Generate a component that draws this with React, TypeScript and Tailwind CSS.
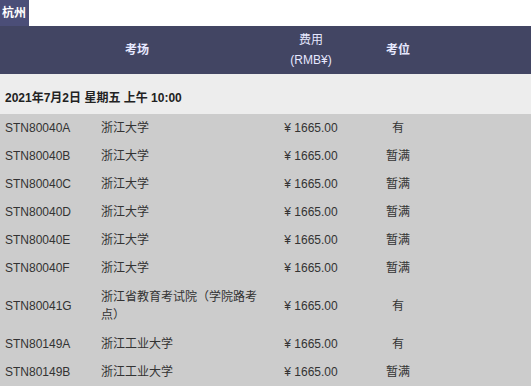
const rows = [
  { code: "STN80040A", site: "浙江大学", seat: "有" },
  { code: "STN80040B", site: "浙江大学", seat: "暂满" },
  { code: "STN80040C", site: "浙江大学", seat: "暂满" },
  { code: "STN80040D", site: "浙江大学", seat: "暂满" },
  { code: "STN80040E", site: "浙江大学", seat: "暂满" },
  { code: "STN80040F", site: "浙江大学", seat: "暂满" },
  { code: "STN80041G", site: "浙江省教育考试院（学院路考点）", seat: "有", tall: true },
  { code: "STN80149A", site: "浙江工业大学", seat: "有" },
  { code: "STN80149B", site: "浙江工业大学", seat: "暂满" },
];

const font = { fontFamily: '"Liberation Sans", "Noto Sans CJK SC", sans-serif' };

export default function App() {
  return (
    <div className="w-[531px] bg-white text-[12px] leading-[18px]" style={font}>
      <div className="flex">
        <div className="flex h-[26px] w-[29px] items-center pl-[2px] font-bold text-white bg-[#4b4e78]">
          杭州
        </div>
      </div>

      <div className="grid h-[48px] grid-cols-[274px_74px_100px_1fr] items-center bg-[#424563] text-[#e6e8ff]">
        <div className="text-center font-bold">考场</div>
        <div className="text-center leading-[20px]">
          <div>费用</div>
          <div>(RMB¥)</div>
        </div>
        <div className="text-center font-bold">考位</div>
        <div />
      </div>

      <div className="bg-[#ededed] pb-[7px] pl-[5px] pt-[15px] font-bold text-[#222]">
        2021年7月2日 星期五 上午 10:00
      </div>

      <div className="bg-[#cccccc] text-[#333]">
        {rows.map((r) => (
          <div
            key={r.code}
            className={
              r.tall
                ? "grid grid-cols-[96px_178px_74px_100px_1fr] items-center py-[6px]"
                : "grid grid-cols-[96px_178px_74px_100px_1fr] items-center py-[5px]"
            }
          >
            <div className="pl-[5px]">{r.code}</div>
            <div className="pl-[5px] pr-[12px]">{r.site}</div>
            <div className="text-center">¥ 1665.00</div>
            <div className="text-center">{r.seat}</div>
            <div />
          </div>
        ))}
      </div>
    </div>
  );
}
